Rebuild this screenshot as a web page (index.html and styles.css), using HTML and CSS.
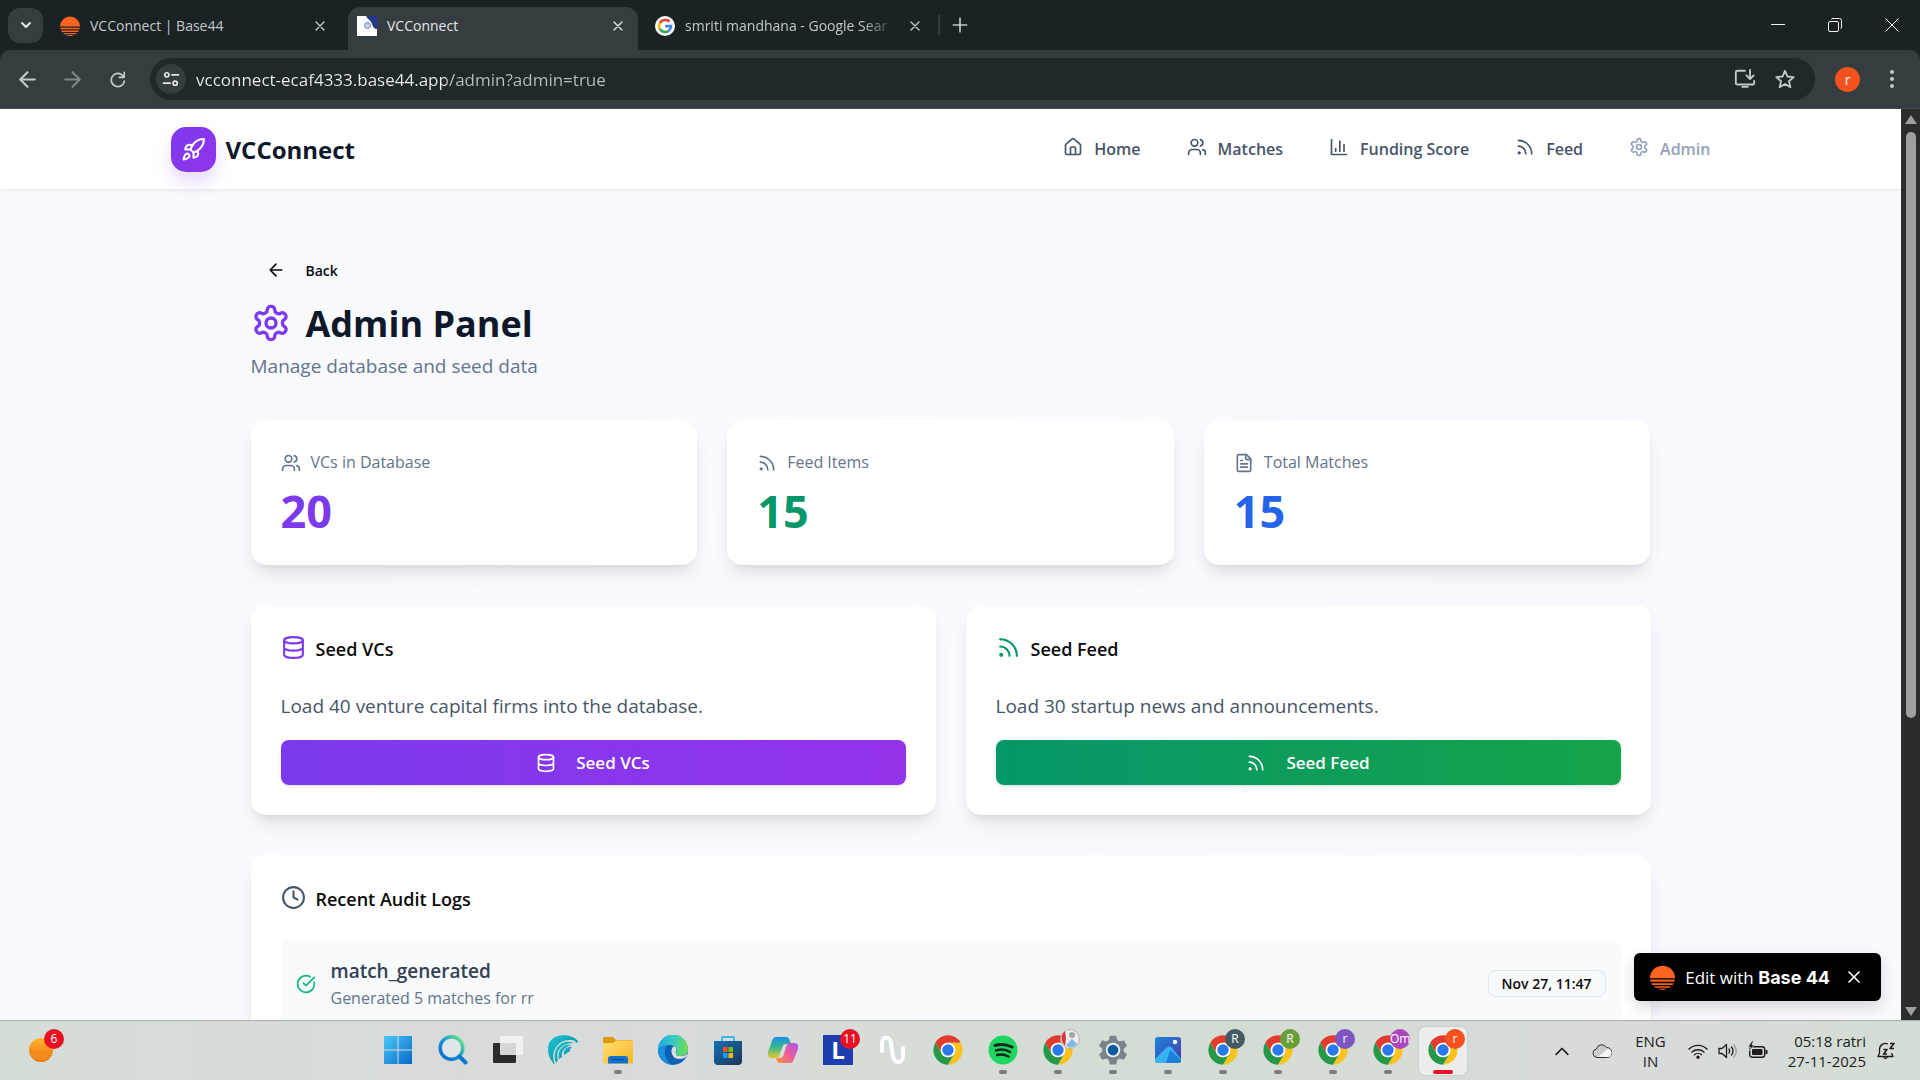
FILE: index.html
```html
<!DOCTYPE html>
<html lang="en">
<head>
    <meta charset="UTF-8">
    <title>VCConnect</title>
    <link rel="stylesheet" href="styles.css">
</head>
<body>

<svg class="sprite" aria-hidden="true">
    <defs>
        <linearGradient id="g-blue" x1="0" y1="0" x2="1" y2="1"><stop offset="0" stop-color="#4cc8fa"/><stop offset="1" stop-color="#0669c6"/></linearGradient>
        <linearGradient id="g-search" x1="1" y1="0" x2="0" y2="1"><stop offset="0.1" stop-color="#5ee08a"/><stop offset="0.5" stop-color="#1797d6"/><stop offset="1" stop-color="#0a63cf"/></linearGradient>
        <linearGradient id="g-wave" x1="0" y1="0" x2="1" y2="1"><stop offset="0" stop-color="#19c7d4"/><stop offset="1" stop-color="#0b7f95"/></linearGradient>
        <linearGradient id="g-folder" x1="0" y1="0" x2="1" y2="1"><stop offset="0" stop-color="#ffe07a"/><stop offset="1" stop-color="#f8b51c"/></linearGradient>
        <linearGradient id="g-edge" x1="0" y1="0.2" x2="1" y2="0.3"><stop offset="0" stop-color="#1fa8e4"/><stop offset="0.5" stop-color="#35c9c6"/><stop offset="1" stop-color="#6fe04e"/></linearGradient>
        <linearGradient id="g-store" x1="0" y1="0" x2="1" y2="1"><stop offset="0" stop-color="#1273b8"/><stop offset="1" stop-color="#1d3457"/></linearGradient>
        <linearGradient id="g-cop1" x1="0" y1="0" x2="0" y2="1"><stop offset="0" stop-color="#1b8fe8"/><stop offset="0.5" stop-color="#36b98c"/><stop offset="1" stop-color="#ecc62c"/></linearGradient>
        <linearGradient id="g-cop2" x1="1" y1="0" x2="0" y2="1"><stop offset="0" stop-color="#a45af0"/><stop offset="0.5" stop-color="#ee5b9a"/><stop offset="1" stop-color="#fb9a3e"/></linearGradient>
        <linearGradient id="g-photo" x1="0" y1="0" x2="1" y2="1"><stop offset="0" stop-color="#1d84dd"/><stop offset="1" stop-color="#4b3aa8"/></linearGradient>
        <linearGradient id="g-sun" x1="0" y1="0" x2="0" y2="1"><stop offset="0" stop-color="#ffb52b"/><stop offset="1" stop-color="#ef6a12"/></linearGradient>
    </defs>
    <symbol id="i-x" viewBox="0 0 24 24"><path d="M18 6 6 18M6 6l12 12"/></symbol>
    <symbol id="i-chevron" viewBox="0 0 24 24"><path d="m6 9 6 6 6-6"/></symbol>
    <symbol id="i-chevron-up" viewBox="0 0 24 24"><path d="m5 16 7-7 7 7"/></symbol>
    <symbol id="i-plus" viewBox="0 0 24 24"><path d="M12 4v16M4 12h16"/></symbol>
    <symbol id="i-back" viewBox="0 0 24 24"><path d="m12 19-7-7 7-7M19 12H5"/></symbol>
    <symbol id="i-forward" viewBox="0 0 24 24"><path d="m12 5 7 7-7 7M5 12h14"/></symbol>
    <symbol id="i-reload" viewBox="0 0 24 24"><path d="M19.500 4v6h-6M19 10a7.900 7.900 0 1 0 .6 4.500"/></symbol>
    <symbol id="i-tune" viewBox="0 0 24 24"><circle cx="7" cy="7" r="2.5"/><path d="M13 7h8M3 17h8"/><circle cx="17" cy="17" r="2.5"/></symbol>
    <symbol id="i-install" viewBox="0 0 24 24"><path d="M12 3H3.500a1.500 1.500 0 0 0-1.500 1.500v12A1.500 1.500 0 0 0 3.500 18h17a1.500 1.500 0 0 0 1.500-1.500V14M17.500 2v9M13.500 8l4 4 4-4M9 20.500h6" /></symbol>
    <symbol id="i-star" viewBox="0 0 24 24"><path d="m12 3 2.700 6.300 6.800.6-5.200 4.500 1.600 6.700L12 17.500l-5.900 3.600 1.600-6.700-5.200-4.500 6.800-.6z"/></symbol>
    <symbol id="i-home" viewBox="0 0 24 24"><path d="M15 21v-8a1 1 0 0 0-1-1h-4a1 1 0 0 0-1 1v8"/><path d="M3 10a2 2 0 0 1 .709-1.528l7-5.999a2 2 0 0 1 2.582 0l7 5.999A2 2 0 0 1 21 10v9a2 2 0 0 1-2 2H5a2 2 0 0 1-2-2z"/></symbol>
    <symbol id="i-users" viewBox="0 0 24 24"><path d="M16 21v-2a4 4 0 0 0-4-4H6a4 4 0 0 0-4 4v2"/><circle cx="9" cy="7" r="4"/><path d="M22 21v-2a4 4 0 0 0-3-3.870M16 3.130a4 4 0 0 1 0 7.750"/></symbol>
    <symbol id="i-chart" viewBox="0 0 24 24"><path d="M3 3v18h18M18 17V9M13 17V5M8 17v-3"/></symbol>
    <symbol id="i-rss" viewBox="0 0 24 24"><path d="M4 11a9 9 0 0 1 9 9M4 4a16 16 0 0 1 16 16"/><circle cx="5" cy="19" r="1"/></symbol>
    <symbol id="i-settings" viewBox="0 0 24 24"><path d="M12.220 2h-.44a2 2 0 0 0-2 2v.18a2 2 0 0 1-1 1.730l-.43.25a2 2 0 0 1-2 0l-.15-.08a2 2 0 0 0-2.730.73l-.22.38a2 2 0 0 0 .73 2.730l.15.1a2 2 0 0 1 1 1.720v.51a2 2 0 0 1-1 1.740l-.15.09a2 2 0 0 0-.73 2.730l.22.38a2 2 0 0 0 2.730.73l.15-.08a2 2 0 0 1 2 0l.43.25a2 2 0 0 1 1 1.730V20a2 2 0 0 0 2 2h.44a2 2 0 0 0 2-2v-.18a2 2 0 0 1 1-1.730l.43-.25a2 2 0 0 1 2 0l.15.08a2 2 0 0 0 2.730-.73l.22-.39a2 2 0 0 0-.73-2.730l-.15-.08a2 2 0 0 1-1-1.740v-.5a2 2 0 0 1 1-1.740l.15-.09a2 2 0 0 0 .73-2.730l-.22-.38a2 2 0 0 0-2.730-.73l-.15.08a2 2 0 0 1-2 0l-.43-.25a2 2 0 0 1-1-1.730V4a2 2 0 0 0-2-2z"/><circle cx="12" cy="12" r="3"/></symbol>
    <symbol id="i-rocket" viewBox="0 0 24 24"><path d="M4.500 16.500c-1.500 1.260-2 5-2 5s3.740-.5 5-2c.71-.84.7-2.130-.09-2.910a2.180 2.180 0 0 0-2.910-.09z"/><path d="m12 15-3-3a22 22 0 0 1 2-3.950A12.880 12.880 0 0 1 22 2c0 2.720-.78 7.500-6 11a22.350 22.350 0 0 1-4 2z"/><path d="M9 12H4s.55-3.030 2-4c1.620-1.080 5 0 5 0M12 15v5s3.030-.55 4-2c1.080-1.620 0-5 0-5"/></symbol>
    <symbol id="i-file" viewBox="0 0 24 24"><path d="M15 2H6a2 2 0 0 0-2 2v16a2 2 0 0 0 2 2h12a2 2 0 0 0 2-2V7z"/><path d="M14 2v4a2 2 0 0 0 2 2h4M10 9H8M16 13H8M16 17H8"/></symbol>
    <symbol id="i-database" viewBox="0 0 24 24"><ellipse cx="12" cy="5" rx="9" ry="3"/><path d="M3 5v14a9 3 0 0 0 18 0V5M3 12a9 3 0 0 0 18 0"/></symbol>
    <symbol id="i-clock" viewBox="0 0 24 24"><circle cx="12" cy="12" r="10"/><path d="M12 6v6l4 2"/></symbol>
    <symbol id="i-check" viewBox="0 0 24 24"><path d="M21.800 10A10 10 0 1 1 17 3.335"/><path d="m9 11 3 3L22 4"/></symbol>
    <symbol id="i-base44" viewBox="0 0 24 24">
        <g fill="#ff631f"><path d="M0 12.600a12 12 0 1 1 24 0z"/><path d="M.2 14h23.600l-.5 2H.7zM1.300 17.400h21.400l-1 1.700H2.300zM3.500 20.400h17l-2 1.500h-13zM7.500 22.900h9c-3 1.400-6 1.400-9 0z"/></g>
    </symbol>
    <symbol id="i-google" viewBox="0 0 24 24">
        <circle cx="12" cy="12" r="12" fill="#fff"/>
        <path fill="none" stroke="#ea4335" stroke-width="3.200" d="M17.300 6.900a7.200 7.200 0 0 0-11.500 1.600"/>
        <path fill="none" stroke="#fbbc05" stroke-width="3.200" d="M5.800 8.500a7.200 7.200 0 0 0 0 7"/>
        <path fill="none" stroke="#34a853" stroke-width="3.200" d="M5.800 15.500a7.200 7.200 0 0 0 10.800 2.100"/>
        <path fill="none" stroke="#4285f4" stroke-width="3.200" d="M16.600 17.600a7.200 7.200 0 0 0 2.600-5.400H12.200"/>
    </symbol>
    <symbol id="i-chrome" viewBox="0 0 48 48">
        <path fill="#e33b2e" d="M4.950 13A22 22 0 0 1 43.050 13H24A11 11 0 0 0 14.500 29.500z"/>
        <path fill="#fcc31e" d="M43.050 13A22 22 0 0 1 24 46L33.500 29.500A11 11 0 0 0 24 13z"/>
        <path fill="#279847" d="M24 46A22 22 0 0 1 4.950 13L14.500 29.500A11 11 0 0 0 33.500 29.500z"/>
        <circle cx="24" cy="24" r="11" fill="#fff"/><circle cx="24" cy="24" r="8.500" fill="#2a78ee"/>
    </symbol>
</svg>

<header class="browser">
    <div class="tabstrip">
        <button class="tab-search" aria-label="Search tabs"><svg class="icon s16 bold"><use href="#i-chevron"/></svg></button>
        <div class="tab">
            <svg class="favicon"><use href="#i-base44"/></svg>
            <span class="tab-title">VCConnect | Base44</span>
            <button class="tab-close" aria-label="Close tab"><svg class="icon s16"><use href="#i-x"/></svg></button>
        </div>
        <div class="tab active">
            <svg class="favicon" viewBox="0 0 20 20"><path fill="#fff" d="M0 0h20v20H0z"/><path fill="#25388f" d="M9 0h11v13c-3 0-4-2-5-5-1-4-4-4-6-8z"/><circle cx="10.500" cy="9.500" r="3" fill="#c8cfe6" stroke="#7683b8"/></svg>
            <span class="tab-title">VCConnect</span>
            <button class="tab-close" aria-label="Close tab"><svg class="icon s16"><use href="#i-x"/></svg></button>
        </div>
        <div class="tab">
            <svg class="favicon"><use href="#i-google"/></svg>
            <span class="tab-title fade">smriti mandhana - Google Sear</span>
            <button class="tab-close" aria-label="Close tab"><svg class="icon s16"><use href="#i-x"/></svg></button>
        </div>
        <span class="tab-divider"></span>
        <button class="new-tab" aria-label="New tab"><svg class="icon s20"><use href="#i-plus"/></svg></button>
        <div class="window-controls">
            <button aria-label="Minimize"><svg class="glyph" viewBox="0 0 14 14"><path d="M0 6.500h14"/></svg></button>
            <button aria-label="Restore"><svg class="glyph" viewBox="0 0 14 14"><rect x="0.500" y="3.500" width="10" height="10" rx="1.500"/><path d="M3.500 1.500Q3.500.5 5 .5h6.500a2 2 0 0 1 2 2V9q0 1.500-1 1.500"/></svg></button>
            <button aria-label="Close"><svg class="glyph" viewBox="0 0 14 14"><path d="m.5.500 13 13M13.500.500l-13 13"/></svg></button>
        </div>
    </div>
    <div class="toolbar">
        <button class="tool" aria-label="Back"><svg class="icon s25"><use href="#i-back"/></svg></button>
        <button class="tool dim" aria-label="Forward"><svg class="icon s25"><use href="#i-forward"/></svg></button>
        <button class="tool" aria-label="Reload"><svg class="icon s20"><use href="#i-reload"/></svg></button>
        <div class="omnibox">
            <button class="site-info" aria-label="Site information"><svg class="icon s20"><use href="#i-tune"/></svg></button>
            <input class="url" type="text" aria-label="Address" value="vcconnect-ecaf4333.base44.app/admin?admin=true">
            <button class="tool small" aria-label="Install app"><svg class="icon s22"><use href="#i-install"/></svg></button>
            <button class="tool small" aria-label="Bookmark"><svg class="icon s22"><use href="#i-star"/></svg></button>
        </div>
        <button class="profile" aria-label="Profile">r</button>
        <button class="menu" aria-label="Menu"><i></i><i></i><i></i></button>
    </div>
</header>

<div class="viewport">
    <div class="page">
        <header class="site-header">
            <div class="site-inner">
                <a class="brand" href="#"><span class="brand-logo"><svg class="icon s25"><use href="#i-rocket"/></svg></span>VCConnect</a>
                <nav class="site-nav">
                    <a href="#"><svg class="icon s20"><use href="#i-home"/></svg>Home</a>
                    <a href="#"><svg class="icon s20"><use href="#i-users"/></svg>Matches</a>
                    <a href="#"><svg class="icon s20"><use href="#i-chart"/></svg>Funding Score</a>
                    <a href="#"><svg class="icon s20"><use href="#i-rss"/></svg>Feed</a>
                    <a class="muted" href="#"><svg class="icon s20"><use href="#i-settings"/></svg>Admin</a>
                </nav>
            </div>
        </header>

        <main class="content">
            <button class="back"><svg class="icon s20"><use href="#i-back"/></svg>Back</button>
            <h1><svg class="icon s40 violet"><use href="#i-settings"/></svg>Admin Panel</h1>
            <p class="subtitle">Manage database and seed data</p>

            <section class="stats">
                <div class="card">
                    <div class="stat-label"><svg class="icon s20"><use href="#i-users"/></svg>VCs in Database</div>
                    <div class="stat-value violet">20</div>
                </div>
                <div class="card">
                    <div class="stat-label"><svg class="icon s20"><use href="#i-rss"/></svg>Feed Items</div>
                    <div class="stat-value green">15</div>
                </div>
                <div class="card">
                    <div class="stat-label"><svg class="icon s20"><use href="#i-file"/></svg>Total Matches</div>
                    <div class="stat-value blue">15</div>
                </div>
            </section>

            <section class="seeds">
                <div class="card">
                    <h2><svg class="icon s25 violet"><use href="#i-database"/></svg>Seed VCs</h2>
                    <p>Load 40 venture capital firms into the database.</p>
                    <button class="seed-btn seed-vcs"><svg class="icon s20"><use href="#i-database"/></svg>Seed VCs</button>
                </div>
                <div class="card">
                    <h2><svg class="icon s25 green"><use href="#i-rss"/></svg>Seed Feed</h2>
                    <p>Load 30 startup news and announcements.</p>
                    <button class="seed-btn seed-feed"><svg class="icon s20"><use href="#i-rss"/></svg>Seed Feed</button>
                </div>
            </section>

            <section class="card">
                <h2><svg class="icon s25 slate"><use href="#i-clock"/></svg>Recent Audit Logs</h2>
                <ul class="logs">
                    <li>
                        <svg class="icon s20 emerald"><use href="#i-check"/></svg>
                        <div class="log-text">
                            <strong>match_generated</strong>
                            <span>Generated 5 matches for rr</span>
                        </div>
                        <time class="log-date">Nov 27, 11:47</time>
                    </li>
                </ul>
            </section>
        </main>
    </div>

    <div class="scrollbar">
        <span class="arrow-up"></span>
        <span class="thumb"></span>
        <span class="arrow-down"></span>
    </div>

    <div class="edit-badge">
        <svg class="edit-logo"><use href="#i-base44"/></svg>
        <a href="#">Edit with <b>Base 44</b></a>
        <button aria-label="Close"><svg class="icon s20"><use href="#i-x"/></svg></button>
    </div>
</div>

<footer class="taskbar">
    <div class="weather">
        <button class="app" aria-label="Weather">
            <svg class="app-icon" viewBox="0 0 30 30"><circle cx="14" cy="15" r="12" fill="url(#g-sun)"/><path d="M3 18c4-3 7 2 11 0s8-1 11 1a12 12 0 0 1-22-1z" fill="#f58a1c"/></svg>
            <span class="badge red">6</span>
        </button>
    </div>
    <nav class="apps">
        <button class="app" aria-label="Start"><svg class="app-icon" viewBox="0 0 30 30"><path fill="url(#g-blue)" d="M1 1h13.500v13.500H1zM15.500 1H29v13.500H15.500zM1 15.500h13.500V29H1zM15.500 15.500H29V29H15.500z"/></svg></button>
        <button class="app" aria-label="Search"><svg class="app-icon" viewBox="0 0 30 30"><circle cx="13.500" cy="13" r="11.300" fill="#dfe6e8" stroke="url(#g-search)" stroke-width="3.400"/><path d="m21.500 21.500 6 6" stroke="#1477d4" stroke-width="4" stroke-linecap="round"/></svg></button>
        <button class="app" aria-label="Task view"><svg class="app-icon" viewBox="0 0 30 30"><rect x="0" y="8" width="23" height="20" rx="1" fill="#2b2b2b"/><rect x="7" y="1" width="23" height="19" rx="1" fill="#f4f4f4" opacity="0.850"/></svg></button>
        <button class="app" aria-label="Wave"><svg class="app-icon" viewBox="0 0 30 30"><g fill="url(#g-wave)"><path d="M30 6C22-3 0-2 0 14c0 7 3 12 7 16C2 18 8 5 22 5c3 0 5 0 6 3a2 2 0 0 0 2-2z"/><path d="M26 8C14 3 3 14 8 28l2-3C7 15 14 8 26 8z"/><path d="M24 10c-9-2-15 5-13 14l3-2c-1-6 3-11 10-12z"/><path d="M24 12c-6-1-9 4-8 8l6-4c0-1 0-3 2-4z"/></g></svg></button>
        <button class="app" aria-label="File Explorer"><svg class="app-icon" viewBox="0 0 30 30"><path fill="#dc9a10" d="M0 3.500A1.500 1.500 0 0 1 1.500 2H10l3 3h15.500A1.500 1.500 0 0 1 30 6.500V12H0z"/><path fill="url(#g-folder)" d="M0 8h10l3-2.500h17V27a1.500 1.500 0 0 1-1.500 1.500h-27A1.500 1.500 0 0 1 0 27z"/><path fill="#1173cf" d="M5 28.500V24a3 3 0 0 1 3-3h14a3 3 0 0 1 3 3v4.500z"/><path stroke="#0a4a8e" d="M8 24.500h13"/></svg><i class="dot"></i></button>
        <button class="app" aria-label="Edge"><svg class="app-icon" viewBox="0 0 30 30"><circle cx="15" cy="15" r="15" fill="#0f62b1"/><path fill="url(#g-edge)" d="M0 15A15 15 0 0 1 30 14c0 5-4 7-8 7-3 0-5-1-4-3 2-3 0-8-6-8-6 0-10 3-12 5z"/><path fill="#1b8fdd" d="M0 15c2-4 6-5 9-5-4 5-3 15 5 20C6 29 0 23 0 15z"/><path fill="#d8deda" d="M30 16c0 4-4 5-8 5-5 0-4-2-4-4 1-3 0-5-2-6-4 3-3 9 1 12 4 2 8 1 11-1 1-2 2-4 2-6z"/></svg></button>
        <button class="app" aria-label="Store"><svg class="app-icon" viewBox="0 0 30 30"><path fill="none" stroke="#3fb4e8" stroke-width="2" d="M9 7V3a1 1 0 0 1 1-1h10a1 1 0 0 1 1 1v4"/><path fill="url(#g-store)" d="M1 6h28v20a4 4 0 0 1-4 4H5a4 4 0 0 1-4-4z"/><path fill="#f25022" d="M10 12h4.500v5H10z"/><path fill="#7fba00" d="M15.500 12H20v5h-4.500z"/><path fill="#00a4ef" d="M10 18h4.500v5H10z"/><path fill="#ffb900" d="M15.500 18H20v5h-4.500z"/></svg></button>
        <button class="app" aria-label="Copilot"><svg class="app-icon" viewBox="0 0 30 30"><path fill="url(#g-cop1)" d="M8 2h10c2 0 3 1 4 4l1 3h-5c-2 0-3 1-4 4l-3 8c-1 2-2 2-4 2H4c-4 0-5-3-4-6L4 6c1-3 2-4 4-4z"/><path fill="url(#g-cop2)" d="M22 28H12c-2 0-3-1-4-5h4c2 0 3-1 4-4l2-7c1-3 2-4 5-4h3c4 0 5 3 4 6l-4 10c-1 3-2 4-4 4z"/></svg></button>
        <button class="app" aria-label="L app"><span class="l-tile">L</span><span class="badge red">11</span></button>
        <button class="app" aria-label="Nu"><svg class="app-icon" viewBox="0 0 30 30" fill="none" stroke="#fff" stroke-width="4" stroke-linecap="round"><path d="M4 16V8c0-7 8-7 9 0l2 13c1 8 10 8 10 0v-8"/></svg></button>
        <button class="app" aria-label="Chrome"><svg class="app-icon wide"><use href="#i-chrome"/></svg></button>
        <button class="app" aria-label="Spotify"><svg class="app-icon" viewBox="0 0 30 30"><circle cx="15" cy="15" r="14.500" fill="#1ed760"/><path fill="none" stroke="#10291a" stroke-linecap="round" stroke-width="3" d="M7 10.500c6-2 12-1 17 1.500"/><path fill="none" stroke="#10291a" stroke-linecap="round" stroke-width="2.500" d="M8 15.500c5-1.500 10-1 14 1.500M9 20c4-1 8-.5 11.500 1.500"/></svg><i class="dot"></i></button>
        <button class="app" aria-label="Chrome profile"><svg class="app-icon wide"><use href="#i-chrome"/></svg><svg class="badge photo" viewBox="0 0 20 20"><circle cx="10" cy="10" r="9.500" fill="#ececed" stroke="#a9abab"/><path fill="#d8343a" d="M5 2C0 6 1 13 5 17l1-8z"/><path fill="#7dbbe6" d="m6 16 6-6 5 5c-3 4-8 5-11 1z"/><circle cx="12" cy="6" r="3" fill="#a5a6a8"/></svg><i class="dot"></i></button>
        <button class="app" aria-label="Settings"><svg class="app-icon" viewBox="0 0 24 24"><path fill="#7a828a" d="M9.500.500h5l.8 3.500 2 1.200 3.400-1 2.500 4.300-2.600 2.400v2.200l2.600 2.400-2.500 4.300-3.400-1-2 1.200-.8 3.500h-5L8.700 20l-2-1.200-3.400 1L.8 15.500l2.600-2.400v-2.200L.8 8.500l2.500-4.300 3.400 1L8.700 4z"/><circle cx="12" cy="12" r="5.800" fill="#eef1f3"/><circle cx="12" cy="12" r="4.300" fill="#0e5c9f"/></svg><i class="dot"></i></button>
        <button class="app" aria-label="Photos"><svg class="app-icon" viewBox="0 0 30 30"><rect x="2" y="2" width="26" height="26" rx="3" fill="url(#g-photo)"/><path fill="#36b4f2" d="m2 24 11-11c2-2 4-2 6 0l9 11v1a3 3 0 0 1-3 3H5a3 3 0 0 1-3-3z"/><path fill="#1a7fd6" d="m13 28 4-13 11 10a3 3 0 0 1-3 3z"/><circle cx="22" cy="7" r="2.200" fill="#fff"/></svg><i class="dot"></i></button>
        <button class="app" aria-label="Chrome R"><svg class="app-icon wide"><use href="#i-chrome"/></svg><span class="badge slate-bg">R</span><i class="dot"></i></button>
        <button class="app" aria-label="Chrome R"><svg class="app-icon wide"><use href="#i-chrome"/></svg><span class="badge olive-bg">R</span><i class="dot"></i></button>
        <button class="app" aria-label="Chrome r"><svg class="app-icon wide"><use href="#i-chrome"/></svg><span class="badge indigo-bg">r</span><i class="dot"></i></button>
        <button class="app" aria-label="Chrome Om"><svg class="app-icon wide"><use href="#i-chrome"/></svg><span class="badge pink-bg">Om</span><i class="dot"></i></button>
        <button class="app current" aria-label="Chrome r"><svg class="app-icon wide"><use href="#i-chrome"/></svg><span class="badge orange-bg">r</span><i class="dot"></i></button>
    </nav>
    <div class="tray">
        <button class="tray-up" aria-label="Hidden icons"><svg class="icon s20"><use href="#i-chevron-up"/></svg></button>
        <svg class="tray-icon cloud" viewBox="0 0 20 20"><path fill="#c9cbcb" stroke="#333" d="M5 16.500a4.300 4.300 0 0 1-.6-8.500A5.500 5.500 0 0 1 14.500 6.500a5 5 0 0 1 .8 10z"/><path fill="#f6f6f6" d="M6 16 15.500 8a4 4 0 0 1 0 8z"/></svg>
        <div class="lang">ENG<br>IN</div>
        <div class="tray-group">
            <svg class="tray-icon" viewBox="0 0 20 20" fill="none" stroke="#1c1c1c" stroke-width="1.400" stroke-linecap="round"><path d="M1 8a13 13 0 0 1 18 0M4 11a9 9 0 0 1 12 0M6.500 13.800a5 5 0 0 1 7 0"/><circle cx="10" cy="16.300" r="1" fill="#1c1c1c"/></svg>
            <svg class="tray-icon" viewBox="0 0 20 20" fill="none" stroke="#1c1c1c" stroke-width="1.300" stroke-linecap="round" stroke-linejoin="round"><path d="M1 7.500v5h3l4.500 4V3.500L4 7.500zM11 8q1.500 2 0 4M13.500 6q3 4 0 8"/><path stroke="#9a9e9c" d="M16 4q4.500 6 0 12"/></svg>
            <svg class="tray-icon" viewBox="0 0 20 20"><rect x="1.700" y="5.700" width="15" height="10.600" rx="2.500" fill="none" stroke="#1c1c1c" stroke-width="1.400"/><rect x="4" y="8" width="10.500" height="6" rx="1" fill="#1c1c1c"/><path fill="#1c1c1c" d="M17.500 9h2v4h-2z"/><path fill="#1c1c1c" stroke="#d9ddda" stroke-width="0.700" d="M4 0 0 6h2.500L1.500 9.500 6.500 4H4L5.500 0z"/></svg>
        </div>
        <div class="clock">05:18 ratri<br>27-11-2025</div>
        <svg class="tray-icon" viewBox="0 0 20 20" fill="none" stroke="#1c1c1c" stroke-width="1.300" stroke-linejoin="round"><path d="M12 3a6 6 0 0 0-8.500 5.500V12L2 15.500h15L15.500 12M7.500 16q2 3 4 0"/><path stroke-width="1.600" d="M7.500 8.500h3.500l-3.500 4.500H11M14 2.500h4L14 7.500h4"/></svg>
    </div>
</footer>

</body>
</html>
```

FILE: styles.css
```css
* {
    box-sizing: border-box;
}
body {
    margin: 0;
    height: 100vh;
    display: flex;
    flex-direction: column;
    overflow: hidden;
    font-family: "Open Sans", "Noto Sans", sans-serif;
    font-size: 19px;
    color: #0f172a;
}
button {
    border: 0;
    padding: 0;
    margin: 0;
    background: none;
    color: inherit;
    font-family: inherit;
    display: flex;
    align-items: center;
    justify-content: center;
}
a {
    color: inherit;
    text-decoration: none;
}
h1, h2, p, ul {
    margin: 0;
    padding: 0;
}
.sprite {
    position: absolute;
    width: 0;
    height: 0;
}

/* icons */
.icon {
    fill: none;
    stroke: currentColor;
    stroke-width: 2;
    stroke-linecap: round;
    stroke-linejoin: round;
    flex: none;
}
.bold { stroke-width: 3; }
.s16 { width: 16px; height: 16px; }
.s20 { width: 20px; height: 20px; }
.s22 { width: 22px; height: 22px; }
.s25 { width: 25px; height: 25px; }
.s40 { width: 40px; height: 40px; }
.violet { color: #7c3aed; }
.green { color: #059669; }
.blue { color: #2563eb; }
.slate { color: #475569; }
.emerald { color: #10b981; }

/* browser window */
.browser {
    flex: none;
    background: #1b2224;
    color: #c3c8ca;
}
.tabstrip {
    height: 50px;
    display: flex;
    align-items: center;
    padding-left: 8px;
}
.tab-search {
    width: 35px;
    height: 35px;
    border-radius: 12px;
    background: #363d40;
    color: #e6e8e9;
    margin-right: 5px;
}
.tab {
    width: 300px;
    height: 43px;
    align-self: flex-end;
    display: flex;
    align-items: center;
    gap: 10px;
    padding: 0 18px 6px 12px;
    font-size: 14px;
}
.tab.active {
    width: 290px;
    background: #363d40;
    color: #e3e6e7;
    border-radius: 12px 12px 0 0;
    padding: 0 10px 6px 9px;
}
.tab.active + .tab {
    padding: 0 13px 6px 17px;
}
.favicon {
    width: 20px;
    height: 20px;
    flex: none;
}
.tab-title {
    flex: 1;
    white-space: nowrap;
}
.fade {
    mask-image: linear-gradient(to right, #000 85%, transparent);
}
.tab-close {
    width: 20px;
    height: 20px;
}
.tab-divider {
    width: 2px;
    height: 20px;
    background: #363d40;
}
.new-tab {
    width: 40px;
    height: 35px;
}
.window-controls {
    margin-left: auto;
    display: flex;
}
.window-controls button {
    width: 57px;
    height: 48px;
}
.glyph {
    width: 14px;
    height: 14px;
    fill: none;
    stroke: #f2f4f4;
}
.toolbar {
    height: 59px;
    background: #363d40;
    border-bottom: 1px solid #4b4e50;
    border-radius: 10px 10px 0 0;
    display: flex;
    align-items: center;
    padding: 0 18px 0 5px;
}
.tool {
    width: 45px;
    height: 40px;
}
.tool.small {
    width: 40px;
}
.dim {
    color: #7f8587;
}
.omnibox {
    flex: 1;
    height: 42px;
    margin-left: 10px;
    padding: 0 10px 0 6px;
    border-radius: 21px;
    background: #20282b;
    display: flex;
    align-items: center;
}
.site-info {
    width: 30px;
    height: 30px;
    border-radius: 50%;
    background: #363d40;
    color: #e3e6e7;
}
.url {
    flex: 1;
    border: 0;
    outline: 0;
    padding: 0;
    margin-left: 10px;
    font-family: inherit;
    font-size: 17px;
    /* host bright, path dimmer */
    background: linear-gradient(to right, #eceeef 250px, #b9bfc1 250px);
    background-clip: text;
    color: transparent;
}
.profile {
    width: 25px;
    height: 25px;
    margin-left: 20px;
    border-radius: 50%;
    background: #f4511e;
    color: #fff;
    font-size: 14px;
}
.menu {
    width: 20px;
    margin-left: 22px;
    flex-direction: column;
    gap: 3px;
}
.menu i {
    width: 4px;
    height: 4px;
    border-radius: 50%;
    background: #c3c8ca;
}

/* page */
.viewport {
    flex: 1;
    min-height: 0;
    position: relative;
    display: flex;
}
.page {
    flex: 1;
    overflow: hidden;
    background: linear-gradient(135deg, #f8fafc, #f9f9fe 40%, #fbf8ff);
}
.site-header {
    height: 81px;
    background: #fff;
    border-bottom: 1px solid #eceef2;
    box-shadow: 0 1px 3px rgba(15, 23, 42, 0.05);
}
.site-inner {
    max-width: 1600px;
    height: 100%;
    margin: 0 auto;
    padding: 0 20px;
    display: flex;
    align-items: center;
    justify-content: space-between;
}
.brand {
    display: flex;
    align-items: center;
    gap: 10px;
    font-size: 24px;
    font-weight: 700;
}
.brand-logo {
    width: 45px;
    height: 45px;
    border-radius: 15px;
    background: linear-gradient(135deg, #7c3aed, #9333ea);
    box-shadow: 0 10px 18px rgba(124, 58, 237, 0.18);
    color: #fff;
    display: flex;
    align-items: center;
    justify-content: center;
}
.site-nav {
    display: flex;
    gap: 6px;
    font-size: 16px;
    line-height: 24px;
    font-weight: 600;
    color: #475569;
}
.site-nav a {
    display: flex;
    align-items: flex-start;
    gap: 11px;
    padding: 10px 20px;
}
.site-nav .muted {
    color: #94a3b8;
}
.content {
    max-width: 1440px;
    margin: 0 auto;
    padding: 60px 20px;
}
.back {
    height: 40px;
    padding: 0 15px;
    gap: 20px;
    font-size: 14px;
    font-weight: 600;
    color: #0a0a0a;
}
h1 {
    display: flex;
    align-items: flex-start;
    gap: 15px;
    margin-top: 13px;
    font-size: 36px;
    line-height: 42px;
    font-weight: 700;
}
.subtitle {
    margin: 6px 0 39px;
    line-height: 30px;
    color: #64748b;
}
.card {
    padding: 30px;
    border-radius: 15px;
    background: #fff;
    box-shadow: 0 12px 19px -4px rgba(0, 0, 0, 0.1), 0 5px 8px -5px rgba(0, 0, 0, 0.1);
}
.stats {
    display: grid;
    grid-template-columns: repeat(3, 1fr);
    gap: 30px;
}
.stat-label {
    display: flex;
    align-items: center;
    gap: 10px;
    font-size: 16px;
    line-height: 25px;
    font-weight: 500;
    color: #64748b;
}
.stat-value {
    margin-top: 12px;
    font-size: 45px;
    line-height: 48px;
    font-weight: 700;
}
.seeds {
    display: grid;
    grid-template-columns: repeat(2, 1fr);
    gap: 30px;
    margin: 40px 0;
}
h2 {
    display: flex;
    align-items: flex-start;
    gap: 10px;
    font-size: 18px;
    line-height: 28px;
    font-weight: 600;
    color: #0a0a0a;
}
.seeds p {
    margin: 28px 0 19px;
    line-height: 30px;
    color: #475569;
}
.seed-btn {
    width: 100%;
    height: 45px;
    gap: 20px;
    border-radius: 8px;
    box-shadow: 0 1px 3px rgba(0, 0, 0, 0.15);
    color: #fff;
    font-size: 17px;
    font-weight: 600;
}
.seed-vcs {
    background: linear-gradient(to right, #7c3aed, #9333ea);
}
.seed-feed {
    background: linear-gradient(to right, #059669, #16a34a);
}
.logs {
    margin-top: 27px;
    list-style: none;
}
.logs li {
    display: flex;
    align-items: center;
    gap: 15px;
    padding: 16px 15px 14px;
    border-radius: 10px;
    background: #f8fafc;
}
.log-text {
    flex: 1;
    display: flex;
    flex-direction: column;
}
.log-text strong {
    line-height: 30px;
    font-weight: 600;
    color: #334155;
}
.log-text span {
    font-size: 16px;
    line-height: 25px;
    color: #64748b;
}
.log-date {
    padding: 0 13px;
    border: 1px solid #e2e5ea;
    border-radius: 8px;
    font-size: 14px;
    line-height: 25px;
    font-weight: 600;
    color: #0a0a0a;
}

/* scrollbar */
.scrollbar {
    width: 19px;
    background: #2c2c2c;
    display: flex;
    flex-direction: column;
    align-items: center;
    padding: 6px 0 4px;
}
.arrow-up, .arrow-down {
    border: 6px solid transparent;
    border-top-width: 0;
    border-bottom: 9px solid #9f9f9f;
}
.arrow-down {
    border-bottom-width: 0;
    border-top: 9px solid #9f9f9f;
    margin-top: auto;
}
.thumb {
    width: 10px;
    height: 65%;
    margin-top: 8px;
    border-radius: 5px;
    background: #9f9f9f;
}

.edit-badge {
    position: absolute;
    right: 39px;
    bottom: 19px;
    height: 48px;
    padding: 0 17px 0 16px;
    display: flex;
    align-items: center;
    gap: 10px;
    border-radius: 6px;
    background: #000;
    box-shadow: 0 6px 15px rgba(0, 0, 0, 0.15);
    color: #fff;
    font-size: 17px;
}
.edit-logo {
    width: 25px;
    height: 25px;
}
.edit-badge b {
    font-family: Inter, sans-serif;
    font-size: 18px;
    font-weight: 700;
}
.edit-badge button {
    margin-left: 4px;
}

/* taskbar */
.taskbar {
    flex: none;
    height: 60px;
    border-top: 1px solid #a9adab;
    background: linear-gradient(to right, #d5ddd7, #dadbdb 28%, #d3ddd3 62%, #d9dada 85%, #d3ddd5);
    display: flex;
    align-items: center;
    color: #1c1c1c;
}
.weather {
    width: 374px;
    padding-left: 18px;
}
.apps {
    display: flex;
    gap: 7px;
}
.app {
    position: relative;
    width: 48px;
    height: 48px;
    padding-bottom: 2px;
    border-radius: 6px;
}
.current {
    background: #ebeeec;
    box-shadow: 0 0 2px rgba(0, 0, 0, 0.2);
}
.app-icon {
    width: 30px;
    height: 30px;
}
.app-icon.wide {
    width: 32px;
    height: 32px;
}
.l-tile {
    width: 30px;
    height: 30px;
    background: #1d3db0;
    color: #fff;
    font-size: 24px;
    line-height: 30px;
    font-weight: 700;
}
.badge {
    position: absolute;
    top: 2px;
    right: 2px;
    width: 20px;
    height: 20px;
    border-radius: 50%;
    color: #fff;
    font-size: 12px;
    line-height: 20px;
    text-align: center;
}
.red { background: #e81123; }
.slate-bg { background: #455a64; }
.olive-bg { background: #689f38; }
.indigo-bg { background: #7e57c2; }
.pink-bg { background: #ab47bc; }
.orange-bg { background: #f4511e; }
.dot {
    position: absolute;
    bottom: 1px;
    left: 20px;
    width: 8px;
    height: 4px;
    border-radius: 2px;
    background: #7a7d7b;
}
.current .dot {
    left: 14px;
    width: 20px;
    background: #e81123;
}
.tray {
    flex: 1;
    display: flex;
    align-items: center;
    justify-content: flex-end;
    padding-right: 24px;
    font-size: 15px;
    line-height: 20px;
}
.tray-icon {
    width: 20px;
    height: 20px;
}
.cloud {
    margin: 0 23px 0 20px;
}
.lang {
    text-align: center;
}
.tray-group {
    display: flex;
    gap: 10px;
    margin: 0 20px 0 22px;
}
.clock {
    margin-right: 10px;
    text-align: right;
}
```
